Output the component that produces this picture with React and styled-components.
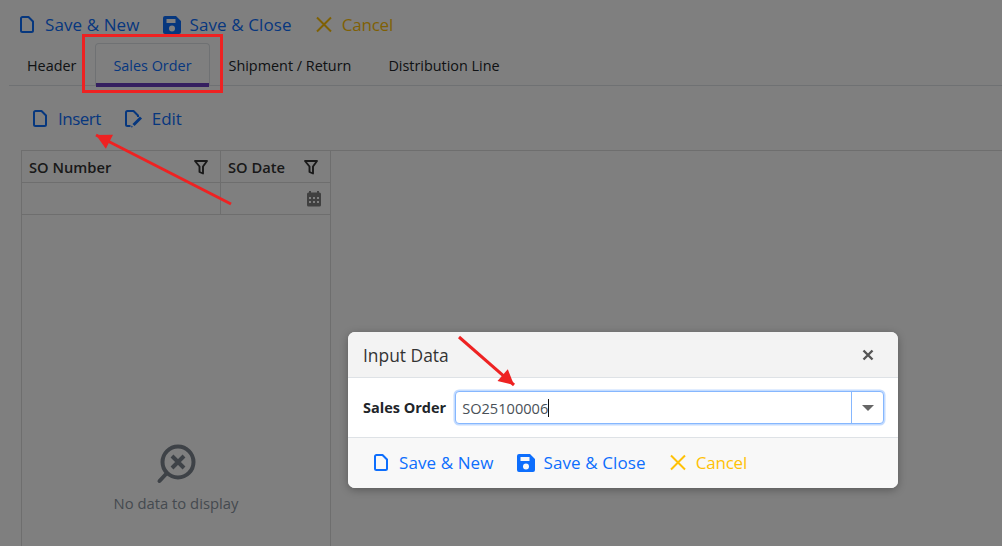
import React from "react";
import styled, { createGlobalStyle } from "styled-components";

const GlobalStyle = createGlobalStyle`
  html, body {
    margin: 0;
    padding: 0;
    background: #fff;
    font-family: "Open Sans", "Noto Sans", sans-serif;
  }
`;

const Page = styled.div`
  position: relative;
  width: 1002px;
  height: 546px;
  overflow: hidden;
  display: flex;
  flex-direction: column;
  background: #fff;
`;

const Toolbar = styled.div`
  display: flex;
  align-items: center;
  gap: ${props => props.$gap || 23}px;
  height: ${props => props.$height || 34}px;
  padding: ${props => props.$padding || "8px 0 0 18px"};
  flex-shrink: 0;
`;

const ActionButton = styled.div`
  display: flex;
  align-items: center;
  gap: 9px;
  font-size: 17px;
  line-height: 20px;
  letter-spacing: ${props => props.$spacing || 0.1}px;
  color: ${props => (props.$warn ? "#ffc107" : "#0d6efd")};
  svg {
    display: block;
  }
`;

const Tabs = styled.div`
  display: flex;
  gap: 1px;
  height: 42px;
  margin: 1px 0 0 9px;
  border-bottom: 1px solid #dee2e6;
  flex-shrink: 0;
`;

const Tab = styled.div`
  position: relative;
  height: 42px;
  box-sizing: border-box;
  padding: 1px 17px 0;
  display: flex;
  align-items: center;
  font-size: 14.4px;
  color: ${props => (props.$active ? "#0d6efd" : "#212529")};
  border: 1px solid ${props => (props.$active ? "#dee2e6" : "transparent")};
  border-bottom: none;
  border-radius: 4px 4px 0 0;
  ${props => props.$active && `
    &::after {
      content: "";
      position: absolute;
      left: 0;
      right: 0;
      bottom: -2px;
      height: 4px;
      background: #6a3fc0;
    }
  `}
`;

const DataGrid = styled.div`
  margin: 6px 0 0 21px;
  flex: 1;
  display: flex;
  flex-direction: column;
  border-top: 1px solid #ddd;
`;

const GridColumn = styled.div`
  width: 308px;
  flex: 1;
  display: flex;
  flex-direction: column;
  border-left: 1px solid #ddd;
  border-right: 1px solid #ddd;
`;

const GridRow = styled.div`
  display: grid;
  grid-template-columns: 198px 110px;
  height: 32px;
  border-bottom: 1px solid #ddd;
  box-sizing: border-box;
  flex-shrink: 0;
`;

const HeaderCell = styled.div`
  display: flex;
  align-items: center;
  justify-content: space-between;
  padding: 0 11px 0 7px;
  font-size: 14.7px;
  font-weight: 600;
  color: #333;
  border-left: ${props => (props.$first ? "none" : "1px solid #ddd")};
`;

const FilterCell = styled.div`
  display: flex;
  align-items: center;
  justify-content: flex-end;
  padding: 0 8px;
  border-left: ${props => (props.$first ? "none" : "1px solid #ddd")};
`;

const EmptyState = styled.div`
  flex: 1;
  display: flex;
  flex-direction: column;
  align-items: center;
  padding-top: 229px;
  color: #8a94a0;
  font-size: 14.8px;
  gap: 9px;
`;

const Backdrop = styled.div`
  position: absolute;
  inset: 0;
  background: rgba(0, 0, 0, 0.5);
`;

const Modal = styled.div`
  position: absolute;
  left: 348px;
  top: 332px;
  width: 550px;
  height: 156px;
  display: flex;
  flex-direction: column;
  border-radius: 7px;
  overflow: hidden;
  background: #fff;
  box-shadow: 0 2px 8px rgba(0, 0, 0, 0.3);
`;

const ModalHeader = styled.div`
  height: 46px;
  flex-shrink: 0;
  box-sizing: border-box;
  display: flex;
  align-items: center;
  justify-content: space-between;
  padding: 0 24px 0 15px;
  background: #f3f3f3;
  border-bottom: 1px solid #dee2e6;
  font-size: 17.4px;
  font-weight: 500;
  color: #333;
`;

const ModalBody = styled.div`
  height: 59px;
  flex-shrink: 0;
  box-sizing: border-box;
  display: flex;
  align-items: center;
  padding: 0 14px 0 15px;
  gap: 9px;
`;

const FieldLabel = styled.label`
  font-size: 14.5px;
  font-weight: 700;
  color: #212529;
  white-space: nowrap;
`;

const ComboBox = styled.div`
  flex: 1;
  height: 31px;
  display: flex;
  border: 1px solid #86b7fe;
  border-radius: 4px;
  box-shadow: 0 0 0 1.5px #c4dcff;
  background: #fff;
`;

const ComboText = styled.div`
  flex: 1;
  display: flex;
  align-items: center;
  padding-left: 6px;
  font-size: 14.6px;
  color: #495057;
`;

const Caret = styled.span`
  display: inline-block;
  width: 1px;
  height: 18px;
  background: #111;
`;

const ComboButton = styled.div`
  width: 31px;
  display: flex;
  align-items: center;
  justify-content: center;
  border-left: 1px solid #86b7fe;
`;

const ArrowDown = styled.span`
  width: 0;
  height: 0;
  border-left: 6px solid transparent;
  border-right: 6px solid transparent;
  border-top: 6px solid #666;
`;

const ModalFooter = styled.div`
  flex: 1;
  display: flex;
  align-items: center;
  gap: 23px;
  padding: 0 0 0 24px;
  background: #f8f8f8;
  border-top: 1px solid #dee2e6;
`;

const Highlight = styled.div`
  position: absolute;
  left: 82px;
  top: 34px;
  width: 141px;
  height: 59px;
  box-sizing: border-box;
  border: 3px solid #ee2222;
`;

const Annotations = styled.svg`
  position: absolute;
  inset: 0;
  pointer-events: none;
`;

const FileIcon = () => (
  <svg width="18" height="18" viewBox="0 0 18 18" fill="none">
    <path
      d="M4.5 1h6l4.5 4.5v9a1.5 1.5 0 0 1-1.5 1.5h-9A1.5 1.5 0 0 1 3 14.5v-12A1.5 1.5 0 0 1 4.5 1z"
      stroke="#0d6efd"
      strokeWidth="2"
      strokeLinejoin="round"
    />
  </svg>
);

const EditIcon = () => (
  <svg width="18" height="18" viewBox="0 0 18 18" fill="none">
    <path
      d="M5.5 16H2.5A1.5 1.5 0 0 1 1 14.5v-12A1.5 1.5 0 0 1 2.5 1h6l4.5 4.5v1.5"
      stroke="#0d6efd"
      strokeWidth="2"
      strokeLinejoin="round"
    />
    <path d="M8.5 15l7.5-7.5" stroke="#0d6efd" strokeWidth="3" />
    <path d="M6 17.5l.6-2 1.4 1.4z" fill="#0d6efd" />
  </svg>
);

const SaveIcon = () => (
  <svg width="18" height="18" viewBox="0 0 18 18">
    <path
      fillRule="evenodd"
      fill="#0d6efd"
      d="M2 0h11l5 5v11a2 2 0 0 1-2 2H2a2 2 0 0 1-2-2V2a2 2 0 0 1 2-2zM3.5 3v4h9V3zM9 9.5a3 3 0 1 0 0 6 3 3 0 0 0 0-6z"
    />
  </svg>
);

const CancelIcon = () => (
  <svg width="18" height="18" viewBox="0 0 18 18">
    <path d="M2 1.5l14 14M16 1.5l-14 14" stroke="#ffc107" strokeWidth="2" />
  </svg>
);

const CloseIcon = () => (
  <svg width="12" height="12" viewBox="0 0 12 12">
    <path d="M1.5 1.5l9 9M10.5 1.5l-9 9" stroke="#555" strokeWidth="2.4" />
  </svg>
);

const FilterIcon = () => (
  <svg width="16" height="16" viewBox="0 0 16 16" fill="none">
    <path
      d="M2 2h12l-4 5.5v7L6.5 13V7.5z"
      stroke="#333"
      strokeWidth="1.9"
      strokeLinejoin="round"
    />
  </svg>
);

const CalendarIcon = () => (
  <svg width="16" height="17" viewBox="0 0 16 17">
    <path
      fillRule="evenodd"
      fill="#808080"
      d="M3 1h2v1.5h6V1h2v1.5h.5A1.5 1.5 0 0 1 15 4v11a1.5 1.5 0 0 1-1.5 1.5h-11A1.5 1.5 0 0 1 1 15V4a1.5 1.5 0 0 1 1.5-1.5H3zM3 7v2h2V7zM7 7v2h2V7zM11 7v2h2V7zM3 11v2h2v-2zM7 11v2h2v-2zM11 11v2h2v-2z"
    />
  </svg>
);

const NoDataIcon = () => (
  <svg width="40" height="40" viewBox="0 0 40 40" fill="none">
    <circle cx="22" cy="18" r="15.5" stroke="#7c848e" strokeWidth="4" />
    <path d="M16 12l12 12M28 12L16 24" stroke="#7c848e" strokeWidth="4" />
    <path d="M10.5 29.5L3.5 37" stroke="#7c848e" strokeWidth="4" strokeLinecap="round" />
  </svg>
);

const Arrow = ({ x1, y1, x2, y2, head = 17 }) => {
  const angle = Math.atan2(y2 - y1, x2 - x1);
  const spread = 0.48;
  const p1 = [x2 - head * Math.cos(angle - spread), y2 - head * Math.sin(angle - spread)];
  const p2 = [x2 - head * Math.cos(angle + spread), y2 - head * Math.sin(angle + spread)];
  return (
    <g>
      <line x1={x1} y1={y1} x2={x2} y2={y2} stroke="#ee2222" strokeWidth="3" />
      <polygon points={`${x2},${y2} ${p1[0]},${p1[1]} ${p2[0]},${p2[1]}`} fill="#ee2222" />
    </g>
  );
};

const SaveActions = () => (
  <>
    <ActionButton>
      <FileIcon />
      Save &amp; New
    </ActionButton>
    <ActionButton>
      <SaveIcon />
      Save &amp; Close
    </ActionButton>
    <ActionButton $warn $spacing={-0.2}>
      <CancelIcon />
      Cancel
    </ActionButton>
  </>
);

export default function App() {
  return (
    <Page>
      <GlobalStyle />
      <Toolbar>
        <SaveActions />
      </Toolbar>
      <Tabs>
        <Tab>Header</Tab>
        <Tab $active>Sales Order</Tab>
        <Tab>Shipment / Return</Tab>
        <Tab>Distribution Line</Tab>
      </Tabs>
      <Toolbar $height={50} $gap={24} $padding="8px 0 0 31px">
        <ActionButton $spacing={-0.5}>
          <FileIcon />
          Insert
        </ActionButton>
        <ActionButton $spacing={-0.1}>
          <EditIcon />
          Edit
        </ActionButton>
      </Toolbar>
      <DataGrid>
        <GridColumn>
          <GridRow>
            <HeaderCell $first>
              SO Number
              <FilterIcon />
            </HeaderCell>
            <HeaderCell>
              SO Date
              <FilterIcon />
            </HeaderCell>
          </GridRow>
          <GridRow>
            <FilterCell $first />
            <FilterCell>
              <CalendarIcon />
            </FilterCell>
          </GridRow>
          <EmptyState>
            <NoDataIcon />
            No data to display
          </EmptyState>
        </GridColumn>
      </DataGrid>
      <Backdrop />
      <Modal>
        <ModalHeader>
          Input Data
          <CloseIcon />
        </ModalHeader>
        <ModalBody>
          <FieldLabel>Sales Order</FieldLabel>
          <ComboBox>
            <ComboText>
              SO25100006
              <Caret />
            </ComboText>
            <ComboButton>
              <ArrowDown />
            </ComboButton>
          </ComboBox>
        </ModalBody>
        <ModalFooter>
          <SaveActions />
        </ModalFooter>
      </Modal>
      <Highlight />
      <Annotations width="1002" height="546" viewBox="0 0 1002 546">
        <Arrow x1={231} y1={204} x2={96} y2={135} />
        <Arrow x1={459} y1={337} x2={514} y2={385} />
      </Annotations>
    </Page>
  );
}
